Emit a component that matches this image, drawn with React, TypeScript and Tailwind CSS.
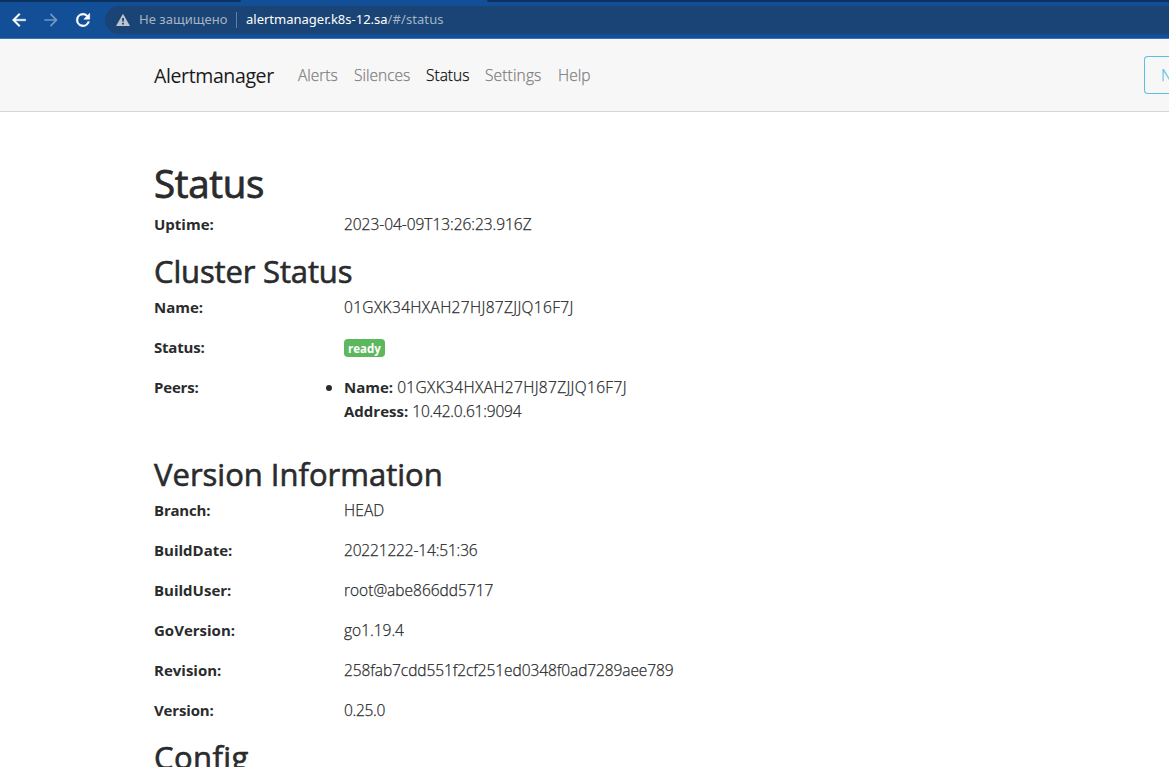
import React from "react";

type Row = { label: string; value: React.ReactNode; labelClass?: string; valueClass?: string };

const versionRows: Row[] = [
  { label: "Branch:", value: "HEAD", labelClass: "tracking-[-0.2px]", valueClass: "tracking-[0.1px]" },
  { label: "BuildDate:", value: "20221222-14:51:36", valueClass: "tracking-[-0.16px]" },
  { label: "BuildUser:", value: "root@abe866dd5717" },
  { label: "GoVersion:", value: "go1.19.4" },
  { label: "Revision:", value: "258fab7cdd551f2cf251ed0348f0ad7289aee789", valueClass: "tracking-[-0.09px]" },
  { label: "Version:", value: "0.25.0", labelClass: "tracking-[-0.15px]", valueClass: "tracking-[-0.3px]" },
];

function InfoRow({ label, value, labelClass = "", valueClass = "" }: Row) {
  return (
    <div className="mb-4 flex leading-6">
      <div className="w-[190px] shrink-0">
        <b className={`text-[15px] font-bold [-webkit-text-stroke:0px] ${labelClass}`}>{label}</b>
      </div>
      <div className={`whitespace-nowrap ${valueClass}`}>{value}</div>
    </div>
  );
}

function Heading({ children, className = "" }: { children: React.ReactNode; className?: string }) {
  return (
    <h2 className="mb-2 h-[35px] pt-[2px] text-[31px] leading-[35px] font-normal whitespace-nowrap [-webkit-text-stroke:0.6px]">
      <span className={className}>{children}</span>
    </h2>
  );
}

function BrowserBar() {
  return (
    <div className="flex h-[39px] flex-col border-b border-[#3d73b4] bg-[#134f97]">
      <div className="flex h-[2px] shrink-0 justify-between">
        <div className="h-[2px] w-[241px] rounded-br-md bg-[#0b315e]" />
        <div className="h-[2px] w-[682px] rounded-bl-md bg-[#0b315e]" />
      </div>
      <div className="flex h-[36px] items-center">
        <svg className="ml-[9px] size-5 shrink-0" viewBox="0 0 24 24" fill="#ffffff">
          <path d="M20 11H7.83l5.59-5.59L12 4l-8 8 8 8 1.41-1.41L7.83 13H20v-2z" stroke="#ffffff" strokeWidth="0.5" />
        </svg>
        <svg className="ml-3 size-5 shrink-0" viewBox="0 0 24 24" fill="#7297c4">
          <path d="M12 4l-1.41 1.41L16.17 11H4v2h12.17l-5.58 5.59L12 20l8-8z" />
        </svg>
        <svg className="ml-3 size-5 shrink-0" viewBox="0 0 24 24" fill="#ffffff">
          <path d="M17.65 6.35A7.96 7.96 0 0 0 12 4a8 8 0 1 0 7.73 10h-2.08A6 6 0 1 1 12 6c1.66 0 3.14.69 4.22 1.78L13 11h7V4l-2.35 2.35z" stroke="#ffffff" strokeWidth="0.7" />
        </svg>
        <div className="ml-3 flex h-7 flex-1 items-center rounded-l-full bg-[#1a4475] font-['Noto_Sans','Open_Sans',sans-serif] text-[13px] font-normal whitespace-nowrap [-webkit-text-stroke:0px]">
          <svg className="ml-[11px] h-[14px] w-[14px] shrink-0" viewBox="0 0 14 14">
            <path d="M7 .8 14 13H0z" fill="#bdc4cc" />
            <path d="M6.1 5h1.8v3.5H6.1zM6.1 9.7h1.8v1.8H6.1z" fill="#1a4475" />
          </svg>
          <span className="ml-[9px] w-[90px] tracking-[0.05px] text-[#a7b4c4]">Не защищено</span>
          <span className="ml-[7px] h-4 w-px bg-[#647f9f]" />
          <span className="ml-[9px] text-white">alertmanager.k8s-12.sa</span>
          <span className="tracking-[0.08px] text-[#a3b4c8]">/#/status</span>
        </div>
      </div>
    </div>
  );
}

function NavBar() {
  return (
    <nav className="flex h-[73px] items-center overflow-hidden border-b border-[#d5d5d5] bg-[#f7f7f7] pl-[154px] text-[15.5px] whitespace-nowrap text-[#808080]">
      <div className="flex items-center pt-[2px]">
        <a className="w-[144px] text-[19.5px] font-normal tracking-[-0.38px] text-[#1a1a1a] [-webkit-text-stroke:0px]">Alertmanager</a>
        <a className="w-[56px]">Alerts</a>
        <a className="w-[72px]">Silences</a>
        <a className="w-[59px] text-[#0d0d0d]">Status</a>
        <a className="w-[73px] tracking-[0.15px]">Settings</a>
        <a className="w-[60px]">Help</a>
      </div>
      <div className="ml-auto h-[38px] w-[25px] overflow-hidden rounded-l border border-r-0 border-[#5bc0de] pl-4 leading-[37px] text-[#5bc0de]">
        New Silence
      </div>
    </nav>
  );
}

export default function App() {
  return (
    <div className="h-[767px] w-[1169px] overflow-hidden bg-white font-['Open_Sans','Noto_Sans',sans-serif] text-[15.5px] font-light text-[#292b2c] [-webkit-text-stroke:0.25px]">
      <BrowserBar />
      <NavBar />
      <main className="pt-12 pl-[154px]">
        <h1 className="mb-2 h-11 text-[38.5px] leading-[46px] font-normal tracking-[-0.3px] [-webkit-text-stroke:0.8px]">Status</h1>
        <InfoRow label="Uptime:" value="2023-04-09T13:26:23.916Z" valueClass="tracking-[-0.04px]" />
        <Heading className="tracking-[-0.15px]">Cluster Status</Heading>
        <InfoRow label="Name:" value="01GXK34HXAH27HJ87ZJJQ16F7J" valueClass="tracking-[0.34px]" />
        <InfoRow
          label="Status:"
          labelClass="tracking-[-0.2px]"
          value={
            <span className="mt-1 flex h-[18px] w-[41px] items-center justify-center rounded bg-[#5cb85c] pt-px text-[11.5px] font-bold text-white [-webkit-text-stroke:0px]">
              ready
            </span>
          }
        />
        <div className="mb-8 flex leading-6">
          <div className="w-[190px] shrink-0">
            <b className="text-[15px] font-bold tracking-[-0.2px] [-webkit-text-stroke:0px]">Peers:</b>
          </div>
          <ul className="relative whitespace-nowrap">
            <li>
              <span className="absolute top-[10px] -left-[18px] size-[6px] rounded-full bg-[#292b2c]" />
              <b className="text-[15px] font-bold [-webkit-text-stroke:0px]">Name:</b>{" "}
              <span className="tracking-[0.34px]">01GXK34HXAH27HJ87ZJJQ16F7J</span>
              <br />
              <b className="text-[15px] font-bold [-webkit-text-stroke:0px]">Address:</b>{" "}
              <span className="tracking-[-0.2px]">10.42.0.61:9094</span>
            </li>
          </ul>
        </div>
        <Heading>Version Information</Heading>
        {versionRows.map((row) => (
          <InfoRow key={row.label} {...row} />
        ))}
        <Heading className="tracking-[0.4px]">Config</Heading>
      </main>
    </div>
  );
}
